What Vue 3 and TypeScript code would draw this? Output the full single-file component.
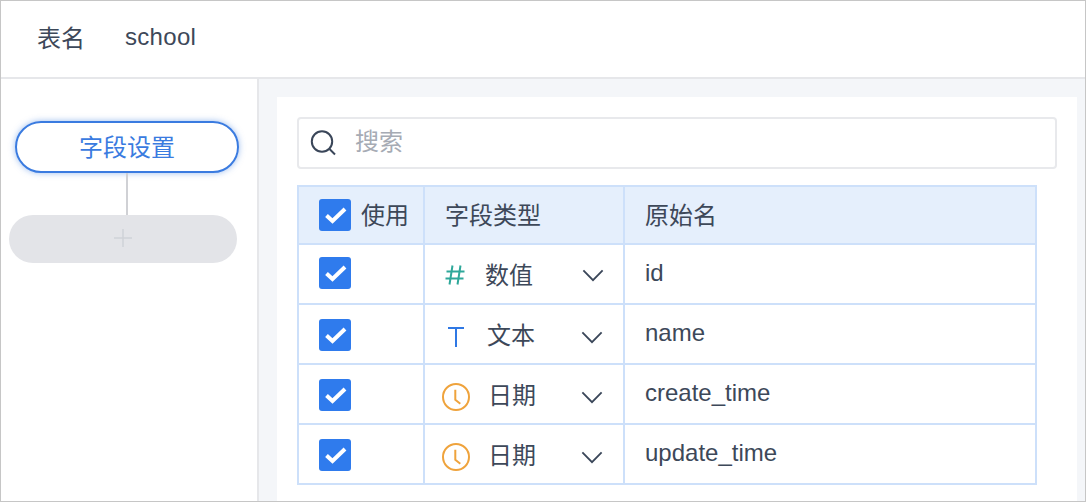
<script setup lang="ts">
interface Field {
  type: "number" | "text" | "date"
  label: string
  name: string
}

const fields: Field[] = [
  {type: "number", label: "数值", name: "id"},
  {type: "text", label: "文本", name: "name"},
  {type: "date", label: "日期", name: "create_time"},
  {type: "date", label: "日期", name: "update_time"},
]
</script>

<template>
  <div class="page">
    <header class="top">
      <span class="top-label">表名</span>
      <span class="top-value">school</span>
    </header>
    <div class="body">
      <aside class="side">
        <div class="step">字段设置</div>
        <div class="line"></div>
        <div class="add">
          <svg width="20" height="20" viewBox="0 0 20 20">
            <path d="M10 1v18M1 10h18" stroke="#d0d2d7" stroke-width="1.5" fill="none" />
          </svg>
        </div>
      </aside>
      <main class="content">
        <div class="panel">
          <div class="search">
            <svg class="search-icon" width="28" height="28" viewBox="0 0 28 28">
              <circle cx="13" cy="12.5" r="10.2" stroke="#3a4659" stroke-width="2" fill="none" />
              <path d="M20.5 20l5.5 5.5" stroke="#3a4659" stroke-width="2" fill="none" />
            </svg>
            <span class="placeholder">搜索</span>
          </div>
          <div class="table">
            <div class="row head">
              <div class="cell use">
                <span class="check">
                  <svg width="32" height="32" viewBox="0 0 32 32">
                    <path d="M7.5 16.5L13.5 22 26 10" stroke="#fff" stroke-width="4" fill="none" />
                  </svg>
                </span>
                <span class="use-text">使用</span>
              </div>
              <div class="cell type">字段类型</div>
              <div class="cell name">原始名</div>
            </div>
            <div v-for="(f, i) in fields" :key="f.name" class="row">
              <div class="cell use">
                <span class="check" :class="i === 0 ? 'up' : 'down'">
                  <svg width="32" height="32" viewBox="0 0 32 32">
                    <path d="M7.5 16.5L13.5 22 26 10" stroke="#fff" stroke-width="4" fill="none" />
                  </svg>
                </span>
              </div>
              <div class="cell type" :class="f.type">
                <span class="type-icon">
                  <svg v-if="f.type === 'number'" width="20" height="20" viewBox="0 0 20 20">
                    <path d="M7.5 .5L4.5 19.5M15.5 .5L12.5 19.5M1.5 6.5h18M.5 13.5h18" stroke="#2fa89a" stroke-width="2" fill="none" />
                  </svg>
                  <svg v-else-if="f.type === 'text'" width="16" height="20" viewBox="0 0 16 20">
                    <path d="M0 1h16M8 1v19" stroke="#2f78e4" stroke-width="2" fill="none" />
                  </svg>
                  <svg v-else width="28" height="28" viewBox="0 0 28 28">
                    <circle cx="14" cy="14" r="13" stroke="#efa33c" stroke-width="2" fill="none" />
                    <path d="M13.3 6.7v10l5 4" stroke="#efa33c" stroke-width="2" fill="none" />
                  </svg>
                </span>
                <span class="type-text">{{ f.label }}</span>
                <svg class="chevron" width="24" height="14" viewBox="0 0 24 14">
                  <path d="M1.5 1.5L12 12 22.5 1.5" stroke="#3a4659" stroke-width="2" fill="none" />
                </svg>
              </div>
              <div class="cell name">{{ f.name }}</div>
            </div>
          </div>
        </div>
      </main>
    </div>
  </div>
</template>

<style scoped>
.page {
  width: 1086px;
  height: 502px;
  box-sizing: border-box;
  border: 1px solid #c6c6c6;
  display: flex;
  flex-direction: column;
  overflow: hidden;
  color: #3d4859;
  font-family: "Liberation Sans", "Noto Sans CJK SC", sans-serif;
  font-size: 24px;
  background: #fff;
}

.top {
  flex: none;
  height: 78px;
  box-sizing: border-box;
  border-bottom: 2px solid #e6e7ea;
  padding: 0 0 4px 36px;
  display: flex;
  align-items: center;
}

.top-label {
  width: 88px;
  margin-bottom: 2px;
}

.top-value {
  letter-spacing: 0.3px;
}

.body {
  flex: 1;
  display: flex;
  min-height: 0;
}

.side {
  flex: none;
  width: 258px;
  box-sizing: border-box;
  border-right: 2px solid #e6e7ea;
  padding: 42px 0 0 8px;
}

.step {
  width: 224px;
  height: 52px;
  margin-left: 6px;
  box-sizing: border-box;
  border: 2px solid #3a7be0;
  border-radius: 26px;
  box-shadow: 0 0 6px rgba(58, 123, 224, 0.5);
  color: #3a7be0;
  display: flex;
  align-items: center;
  justify-content: center;
  padding-bottom: 4px;
}

.line {
  width: 2px;
  height: 42px;
  margin-left: 117px;
  background: #d0d1d5;
}

.add {
  width: 228px;
  height: 48px;
  border-radius: 24px;
  background: #e3e4e8;
  display: flex;
  align-items: center;
  justify-content: center;
  padding-bottom: 2px;
  box-sizing: border-box;
}

.content {
  flex: 1;
  min-width: 0;
  background: #f4f6f9;
  padding: 18px 8px 0 18px;
}

.panel {
  height: 100%;
  background: #fff;
  padding: 20px;
  box-sizing: border-box;
}

.search {
  width: 760px;
  height: 52px;
  box-sizing: border-box;
  border: 2px solid #e8e9ec;
  border-radius: 4px;
  display: flex;
  align-items: center;
  padding: 0 0 0 10px;
}

.search-icon {
  flex: none;
  margin-right: 18px;
}

.placeholder {
  color: #a6abb4;
  margin-bottom: 8px;
}

.table {
  width: 740px;
  margin-top: 16px;
  box-sizing: border-box;
  border: 2px solid #cde0fa;
  border-bottom: 0;
}

.row {
  display: flex;
  height: 60px;
  box-sizing: border-box;
  border-bottom: 2px solid #cde0fa;
}

.row.head {
  height: 58px;
  background: #e5effc;
}

.cell {
  display: flex;
  align-items: center;
  box-sizing: border-box;
}

.use {
  width: 126px;
  padding-left: 20px;
  border-right: 2px solid #cde0fa;
}

.type {
  width: 200px;
  padding-left: 20px;
  padding-right: 19px;
  border-right: 2px solid #cde0fa;
}

.name {
  flex: 1;
  padding-left: 20px;
  padding-bottom: 2px;
}

.head .type,
.head .name {
  padding-bottom: 4px;
}

.check {
  flex: none;
  width: 32px;
  height: 32px;
  border-radius: 3px;
  background: #2f7bed;
  display: block;
}

.check.up {
  margin-bottom: 2px;
}

.check.down {
  margin-top: 2px;
}

.check svg {
  display: block;
}

.use-text {
  margin-left: 10px;
  margin-bottom: 4px;
}

.type-icon {
  flex: none;
  width: 20px;
  display: flex;
  justify-content: center;
}

.type-icon svg {
  flex: none;
}

.number .type-icon {
  margin-top: 2px;
}

.text .type-icon,
.date .type-icon {
  margin-top: 6px;
  margin-left: 1px;
  margin-right: -1px;
}

.type-text {
  margin-left: 20px;
  margin-bottom: 2px;
}

.text .type-text {
  margin-left: 22px;
}

.date .type-text {
  margin-left: 23px;
}

.chevron {
  flex: none;
  width: 22px;
  height: 13px;
  margin-left: auto;
}

.number .chevron {
  margin-top: 2px;
}

.text .chevron,
.date .chevron {
  margin-top: 6px;
  margin-right: 1px;
}
</style>

<style>
html,
body {
  margin: 0;
  background: #fff;
}
</style>
